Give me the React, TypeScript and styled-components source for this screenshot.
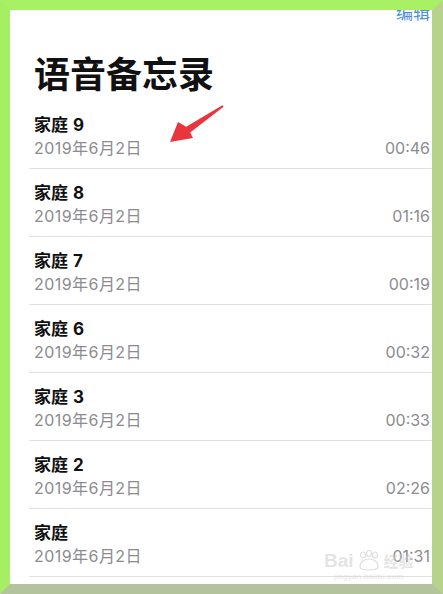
import React from "react";
import styled, { createGlobalStyle } from "styled-components";

const GlobalStyle = createGlobalStyle`
  html, body { margin: 0; padding: 0; background: #ffffff; }
  * { box-sizing: border-box; }
`;

const Frame = styled.div`
  position: relative;
  width: 443px;
  height: 594px;
  overflow: hidden;
  background: #ffffff;
  border-left: 10px solid #a6ef62;
  border-top: 10px solid #a8f064;
  border-right: 11px solid #b7d38b;
  border-bottom: 10px solid #b3c39c;
  font-family: "Inter", "Noto Sans CJK SC", sans-serif;
`;

const NavBar = styled.div`
  height: 48px;
  margin-top: -8px;
  display: flex;
  justify-content: flex-end;
  align-items: flex-start;
  padding-right: 2px;
`;

const EditButton = styled.span`
  font-size: 17px;
  line-height: 20px;
  color: #4d8fdd;
  font-family: "Noto Sans CJK SC", sans-serif;
`;

const Heading = styled.h1`
  margin: 0 0 7px 0;
  padding-left: 24px;
  font-size: 36px;
  line-height: 44px;
  font-weight: 700;
  color: #111111;
  font-family: "Noto Sans CJK SC", sans-serif;
`;

const List = styled.div`
  display: flex;
  flex-direction: column;
  margin-left: 19px;
`;

const Row = styled.div`
  display: grid;
  grid-template-columns: 1fr auto;
  grid-template-rows: 20px 20px;
  row-gap: 3px;
  padding: 14px 2px 10px 5px;
  border-bottom: 1px solid #e1e1e3;
`;

const Title = styled.div`
  grid-column: 1 / 3;
  font-size: 17px;
  line-height: 20px;
  font-weight: 700;
  color: #111111;
  word-spacing: 1px;
`;

const Meta = styled.div`
  font-size: 16px;
  line-height: 20px;
  color: #8b8b90;
`;

const DateText = styled(Meta)`
  letter-spacing: 0.45px;
`;

const Duration = styled(Meta)`
  text-align: right;
`;

const Arrow = styled.svg`
  position: absolute;
  left: 150px;
  top: 90px;
  width: 70px;
  height: 48px;
`;

const Watermark = styled.div`
  position: absolute;
  left: 314px;
  top: 540px;
  display: flex;
  flex-direction: column;
  align-items: center;
  color: rgba(205, 205, 205, 0.55);
  pointer-events: none;
`;

const WatermarkTop = styled.div`
  display: flex;
  align-items: center;
  gap: 2px;
  font-family: "Liberation Sans", sans-serif;
  font-size: 19px;
  font-weight: 700;
  line-height: 22px;
`;

const WatermarkSub = styled.div`
  font-family: "Liberation Sans", sans-serif;
  font-size: 8px;
  line-height: 10px;
  letter-spacing: 0.3px;
`;

const WatermarkCn = styled.span`
  font-family: "Noto Sans CJK SC", sans-serif;
  font-size: 15px;
`;

const records = [
  { title: "家庭 9", time: "00:46" },
  { title: "家庭 8", time: "01:16" },
  { title: "家庭 7", time: "00:19" },
  { title: "家庭 6", time: "00:32" },
  { title: "家庭 3", time: "00:33" },
  { title: "家庭 2", time: "02:26" },
  { title: "家庭", time: "01:31" },
  { title: "家庭 5", time: "00:58" },
];

export default function App() {
  return (
    <>
      <GlobalStyle />
      <Frame>
        <NavBar>
          <EditButton>编辑</EditButton>
        </NavBar>
        <Heading>语音备忘录</Heading>
        <List>
          {records.map((r) => (
            <Row key={r.title}>
              <Title>{r.title}</Title>
              <DateText>2019年6月2日</DateText>
              <Duration>{r.time}</Duration>
            </Row>
          ))}
        </List>
        <Arrow viewBox="0 0 70 48">
          <polygon
            points="62.4,5.2 26.2,26.7 18,22 10,42 33,38 30.2,32.5 63.6,6.8"
            fill="#e8363c"
          />
        </Arrow>
        <Watermark>
          <WatermarkTop>
            <span>Bai</span>
            <svg width="26" height="22" viewBox="0 0 26 22">
              <g fill="none" stroke="rgba(200,200,200,0.6)" strokeWidth="1.2">
                <ellipse cx="7" cy="5" rx="2.5" ry="3" />
                <ellipse cx="13" cy="3.5" rx="2.5" ry="3" />
                <ellipse cx="19" cy="5" rx="2.5" ry="3" />
                <path d="M4 17 C4 11 9 9 13 9 C17 9 22 11 22 17 C22 21 4 21 4 17 Z" />
              </g>
            </svg>
            <WatermarkCn>经验</WatermarkCn>
          </WatermarkTop>
          <WatermarkSub>jingyan.baidu.com</WatermarkSub>
        </Watermark>
      </Frame>
    </>
  );
}
